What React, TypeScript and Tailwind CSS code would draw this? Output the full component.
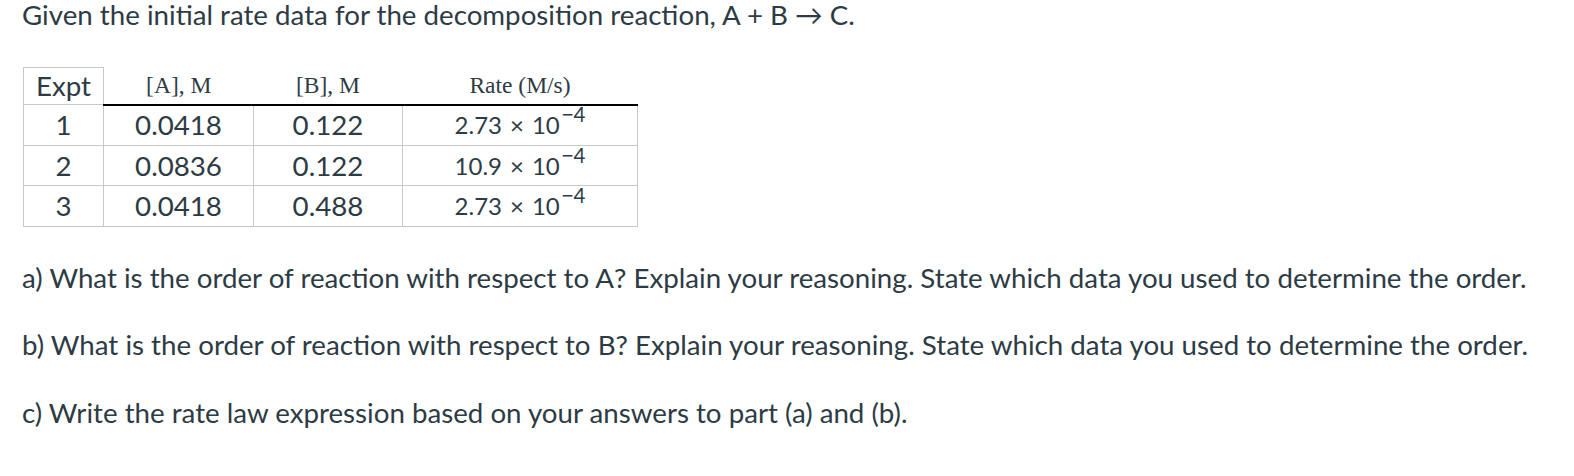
import React from "react";

const rows = [
  { n: "1", a: "0.0418", b: "0.122", r: "2.73", h: "h-[41px]" },
  { n: "2", a: "0.0836", b: "0.122", r: "10.9", h: "h-[40px]" },
  { n: "3", a: "0.0418", b: "0.488", r: "2.73", h: "h-[41px]" },
];

export default function App() {
  return (
    <div className="w-[1574px] h-[476px] bg-white pl-[22px] text-[#2d3b45] font-['Lato',sans-serif] text-[27.7px]">
      <p className="leading-[30px]">Given the initial rate data for the decomposition reaction, A + B → C.</p>

      <table className="mt-[37px] ml-[1px] border-collapse">
        <thead>
          <tr className="h-[37px]">
            <th className="w-[80px] border border-[#c8c8c8] font-normal p-0 leading-none">Expt</th>
            <th className="w-[150px] border-b-2 border-black font-normal font-['Liberation_Serif',serif] text-[23.5px] p-0">
              [A], M
            </th>
            <th className="w-[149px] border-b-2 border-black font-normal font-['Liberation_Serif',serif] text-[23.5px] p-0">
              [B], M
            </th>
            <th className="w-[235px] border-b-2 border-black font-normal font-['Liberation_Serif',serif] text-[23.5px] p-0">
              Rate (M/s)
            </th>
          </tr>
        </thead>
        <tbody>
          {rows.map((row) => (
            <tr key={row.n} className={row.h}>
              <td className="border border-[#c8c8c8] text-center p-0 leading-none">{row.n}</td>
              <td className="border border-[#c8c8c8] text-center p-0 leading-none">{row.a}</td>
              <td className="border border-[#c8c8c8] text-center p-0 leading-none">{row.b}</td>
              <td className="border border-[#c8c8c8] text-center p-0 leading-none text-[24px]">
                {row.r}
                <span className="mx-[8px]">×</span>
                10
                <sup className="text-[20.5px] align-baseline relative -top-[12px] ml-[2px]">
                  <span className="font-['Noto_Sans',sans-serif]">−</span>4
                </sup>
              </td>
            </tr>
          ))}
        </tbody>
      </table>

      <div className="mt-[37px] flex flex-col leading-[28px]">
        <p>a) What is the order of reaction with respect to A? Explain your reasoning. State which data you used to determine the order.</p>
        <p className="mt-[39px]">b) What is the order of reaction with respect to B? Explain your reasoning. State which data you used to determine the order.</p>
        <p className="mt-[40px]">c) Write the rate law expression based on your answers to part (a) and (b).</p>
      </div>
    </div>
  );
}
